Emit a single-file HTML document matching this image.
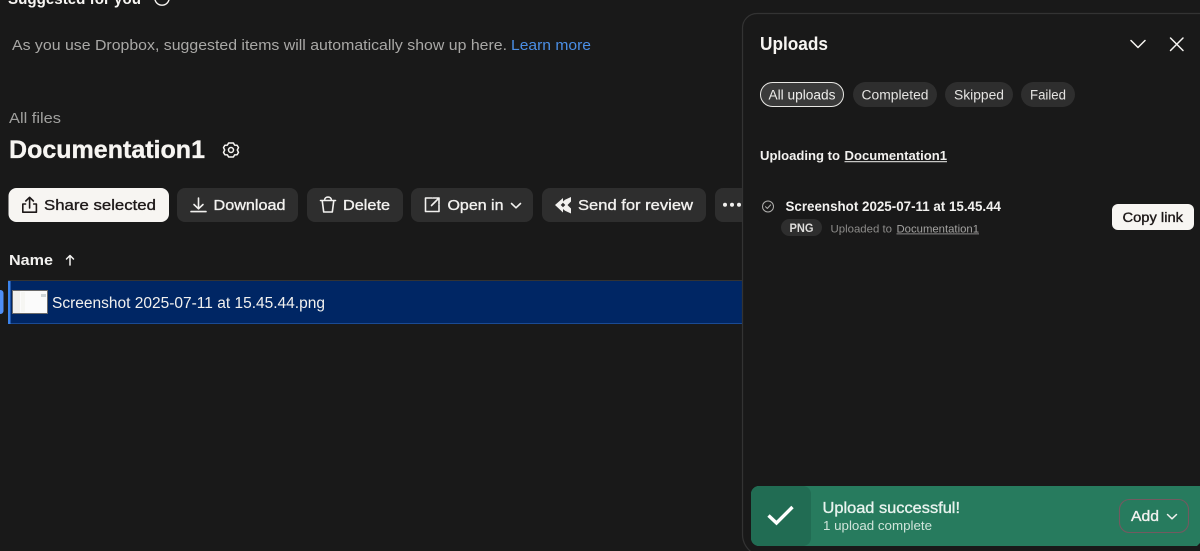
<!DOCTYPE html>
<html lang="en">
<head>
<meta charset="utf-8">
<title>Uploads</title>
<style>
html,body{margin:0;padding:0;width:1200px;height:551px;overflow:hidden;background:#191919}
svg{display:block}
text{font-family:"Liberation Sans",sans-serif}
.m{stroke-width:.35px}
.ic{fill:none;stroke-linecap:round;stroke-linejoin:round}
</style>
</head>
<body>
<svg width="1200" height="551" viewBox="0 0 1200 551" xmlns="http://www.w3.org/2000/svg">
<rect width="1200" height="551" fill="#191919"/>

<!-- Suggested -->
<text x="8" y="4" font-size="15.5" font-weight="700" fill="#f7f5f2" textLength="133" lengthAdjust="spacingAndGlyphs">Suggested for you</text>
<circle cx="162" cy="-2" r="7.2" fill="none" stroke="#f7f5f2" stroke-width="1.4"/>
<text x="12" y="50" font-size="15" fill="#a9a8a6" textLength="495" lengthAdjust="spacingAndGlyphs">As you use Dropbox, suggested items will automatically show up here.</text>
<text x="511" y="50" font-size="15" fill="#4b8fe6" textLength="80" lengthAdjust="spacingAndGlyphs">Learn more</text>

<!-- Heading -->
<text x="9" y="123" font-size="15" fill="#a0a09e" textLength="52" lengthAdjust="spacingAndGlyphs">All files</text>
<text class="m" x="9" y="158" font-size="25" font-weight="700" fill="#f7f5f2" stroke="#f7f5f2" textLength="196" lengthAdjust="spacingAndGlyphs">Documentation1</text>
<g class="ic" stroke="#f7f5f2" stroke-width="1.5">
<path d="M228.600 143h4.800l1.200 2.100 2.500.1 1.400 2.400-1.200 2.400 1.200 2.400-1.400 2.400-2.500.1-1.200 2.100h-4.800l-1.200-2.100-2.500-.1-1.400-2.400 1.200-2.400-1.200-2.400 1.400-2.400 2.500-.1z"/>
<circle cx="231" cy="150" r="2.500"/>
</g>

<!-- Toolbar -->
<rect x="8.500" y="188" width="160.500" height="34" rx="8" fill="#f7f5f2"/>
<g class="ic" stroke="#1e1919" stroke-width="1.600">
<path d="M25.500 204H22.800v8.200h13.600V204h-2.700"/><path d="M29.600 208V197.500M25.800 201l3.800-3.700 3.800 3.700"/>
</g>
<text class="m" x="44" y="210" font-size="15" fill="#1e1919" stroke="#1e1919" textLength="112" lengthAdjust="spacingAndGlyphs">Share selected</text>

<rect x="177" y="188" width="121" height="34" rx="8" fill="#2e2e2e"/>
<g class="ic" stroke="#f2f1ef" stroke-width="1.600">
<path d="M198.500 198v10.500M194 204.500l4.500 4.300 4.500-4.300M191 211.600h15"/>
</g>
<text class="m" x="213.500" y="210" font-size="15" fill="#f2f1ef" stroke="#f2f1ef" textLength="72" lengthAdjust="spacingAndGlyphs">Download</text>

<rect x="307" y="188" width="96" height="34" rx="8" fill="#2e2e2e"/>
<g class="ic" stroke="#f2f1ef" stroke-width="1.600">
<path d="M320.500 200.500h15M322.200 200.500l1.500 11.500h8.600l1.500-11.500M324.500 200.500c0-4.600 7-4.600 7 0"/>
</g>
<text class="m" x="343" y="210" font-size="15" fill="#f2f1ef" stroke="#f2f1ef" textLength="47" lengthAdjust="spacingAndGlyphs">Delete</text>

<rect x="411" y="188" width="122" height="34" rx="8" fill="#2e2e2e"/>
<g class="ic" stroke="#f2f1ef" stroke-width="1.600">
<path d="M432 198h-6.500v13.500h13.500V205M433 198h6v6M439 198l-7.500 7.500"/>
<path d="M511.500 203.500l4.500 4.300 4.500-4.300"/>
</g>
<text class="m" x="447.500" y="210" font-size="15" fill="#f2f1ef" stroke="#f2f1ef" textLength="56" lengthAdjust="spacingAndGlyphs">Open in</text>

<rect x="542" y="188" width="164" height="34" rx="8" fill="#2e2e2e"/>
<path fill-rule="evenodd" d="M555 205l8-7v3.500l2-1.800 6-2.700v4.500l-3.500 3.500 3.500 3.500v5l-6-2.700-2-1.800v3.500z M563 202.800l-2.300 2.200 2.300 2.200 2.300-2.200z" fill="#f2f1ef"/>
<text class="m" x="578" y="210" font-size="15" fill="#f2f1ef" stroke="#f2f1ef" textLength="115" lengthAdjust="spacingAndGlyphs">Send for review</text>

<rect x="715" y="188" width="40" height="34" rx="8" fill="#2e2e2e"/>
<circle cx="725" cy="204.800" r="2" fill="#f2f1ef"/><circle cx="732" cy="204.800" r="2" fill="#f2f1ef"/><circle cx="739" cy="204.800" r="2" fill="#f2f1ef"/>

<!-- Table -->
<text x="9" y="265" font-size="15" font-weight="700" fill="#f2f1ef" textLength="44" lengthAdjust="spacingAndGlyphs">Name</text>
<g class="ic" stroke="#f2f1ef" stroke-width="1.500"><path d="M70 265v-9.500M66.500 259l3.500-3.500 3.500 3.500"/></g>

<rect x="8" y="280" width="734" height="1.200" fill="#333"/>
<rect x="8" y="281" width="734" height="42.500" fill="#002664"/>
<rect x="8" y="323" width="734" height="1" fill="#1a4a94"/>
<rect x="8" y="281" width="2.500" height="43" fill="#3b83ea"/>
<path d="M0 290h0.500a3 3 0 0 1 3 3v18a3 3 0 0 1-3 3H0z" fill="#4f8ff7"/>
<rect x="12" y="290" width="36" height="24" fill="#6b6b6b"/>
<rect x="13" y="291" width="34" height="22" fill="#fbfbfb"/>
<rect x="13" y="291" width="7" height="22" fill="#f1f0ec"/>
<rect x="21" y="292" width="4" height="20" fill="#f6f6f3"/>
<rect x="41" y="294" width="5" height="3" fill="#cfd6d8"/>

<text x="52" y="308" font-size="15.500" fill="#f2f1ef" textLength="273" lengthAdjust="spacingAndGlyphs">Screenshot 2025-07-11 at 15.45.44.png</text>

<!-- Panel -->
<path d="M1210 13.500H757a14.500 14.500 0 0 0-14.500 14.500V534a22 22 0 0 0 12 20H1210z" fill="#191919" stroke="#333" stroke-width="1.200"/>

<text x="760" y="50" font-size="18" font-weight="700" fill="#f7f5f2" textLength="68" lengthAdjust="spacingAndGlyphs">Uploads</text>
<g class="ic" stroke="#f7f5f2" stroke-width="1.500">
<path d="M1131 40.500l7 7 7-7"/>
<path d="M1170.500 38l12.500 12.500M1183 38l-12.500 12.500"/>
</g>

<rect x="760.500" y="82.500" width="83" height="24" rx="12" fill="#3a3a3a" stroke="#e8e7e4" stroke-width="1"/>
<text x="768.500" y="99.500" font-size="13.500" fill="#eeedeb" textLength="67" lengthAdjust="spacingAndGlyphs">All uploads</text>
<rect x="853" y="82" width="84" height="25" rx="12.500" fill="#2e2e2e"/>
<text x="861.500" y="99.500" font-size="13.500" fill="#e4e3e1" textLength="67" lengthAdjust="spacingAndGlyphs">Completed</text>
<rect x="945" y="82" width="68" height="25" rx="12.500" fill="#2e2e2e"/>
<text x="954" y="99.500" font-size="13.500" fill="#e4e3e1" textLength="50" lengthAdjust="spacingAndGlyphs">Skipped</text>
<rect x="1021" y="82" width="54" height="25" rx="12.500" fill="#2e2e2e"/>
<text x="1030" y="99.500" font-size="13.500" fill="#e4e3e1" textLength="36" lengthAdjust="spacingAndGlyphs">Failed</text>

<text x="760" y="160" font-size="13" font-weight="700" fill="#f2f1ef" textLength="80" lengthAdjust="spacingAndGlyphs">Uploading to</text>
<text x="844.500" y="160" font-size="13" font-weight="700" fill="#f2f1ef" textLength="102.500" lengthAdjust="spacingAndGlyphs">Documentation1</text>
<rect x="844.500" y="161.200" width="102.500" height="1" fill="#f2f1ef"/>

<g class="ic" stroke="#b0afad" stroke-width="1">
<circle cx="768" cy="206.500" r="5.500"/><path d="M765.500 206.700l1.800 1.800 3.300-3.600"/>
</g>
<text x="785.500" y="211" font-size="13.500" font-weight="700" fill="#f2f1ef" textLength="215.500" lengthAdjust="spacingAndGlyphs">Screenshot 2025-07-11 at 15.45.44</text>

<rect x="781" y="219" width="41" height="17" rx="8.500" fill="#2e2e2e"/>
<text x="789.500" y="232" font-size="11.500" font-weight="700" fill="#dddcda" textLength="24" lengthAdjust="spacingAndGlyphs">PNG</text>
<text x="830.500" y="232.500" font-size="11" fill="#8d8c8a" textLength="61.500" lengthAdjust="spacingAndGlyphs">Uploaded to</text>
<text x="896.500" y="232.500" font-size="11" fill="#a5a4a2" textLength="82.500" lengthAdjust="spacingAndGlyphs">Documentation1</text>
<rect x="896.500" y="233.500" width="82.500" height=".8" fill="#a5a4a2"/>

<rect x="1112" y="204" width="82" height="26" rx="6" fill="#f7f5f2"/>
<text class="m" x="1122.500" y="222" font-size="13.500" fill="#1e1919" stroke="#1e1919" textLength="60.500" lengthAdjust="spacingAndGlyphs">Copy link</text>

<!-- Toast -->
<path d="M759 486H1200V543l-3 3H759a8 8 0 0 1-8-8V494a8 8 0 0 1 8-8z" fill="#277b5e"/>
<path d="M759 486H803a8 8 0 0 1 8 8V538a8 8 0 0 1-8 8H759a8 8 0 0 1-8-8V494a8 8 0 0 1 8-8z" fill="#216c53"/>
<path d="M768.500 515.500l8 7.500 16-16" fill="none" stroke="#fff" stroke-width="3.400"/>
<text class="m" x="822.500" y="513" font-size="16" fill="#e8f3ee" stroke="#e8f3ee" textLength="137.500" lengthAdjust="spacingAndGlyphs">Upload successful!</text>
<text x="823" y="530" font-size="13" fill="#cfe4da" textLength="109" lengthAdjust="spacingAndGlyphs">1 upload complete</text>
<rect x="1119.500" y="499.500" width="69" height="33" rx="10" fill="none" stroke="#725a60" stroke-width="1.100"/>
<text class="m" x="1131" y="521" font-size="15" fill="#f2f1ef" stroke="#f2f1ef" textLength="28" lengthAdjust="spacingAndGlyphs">Add</text>
<path class="ic" d="M1167.500 514.500l4.500 4.300 4.500-4.300" stroke="#f2f1ef" stroke-width="1.500"/>
</svg>
</body>
</html>
